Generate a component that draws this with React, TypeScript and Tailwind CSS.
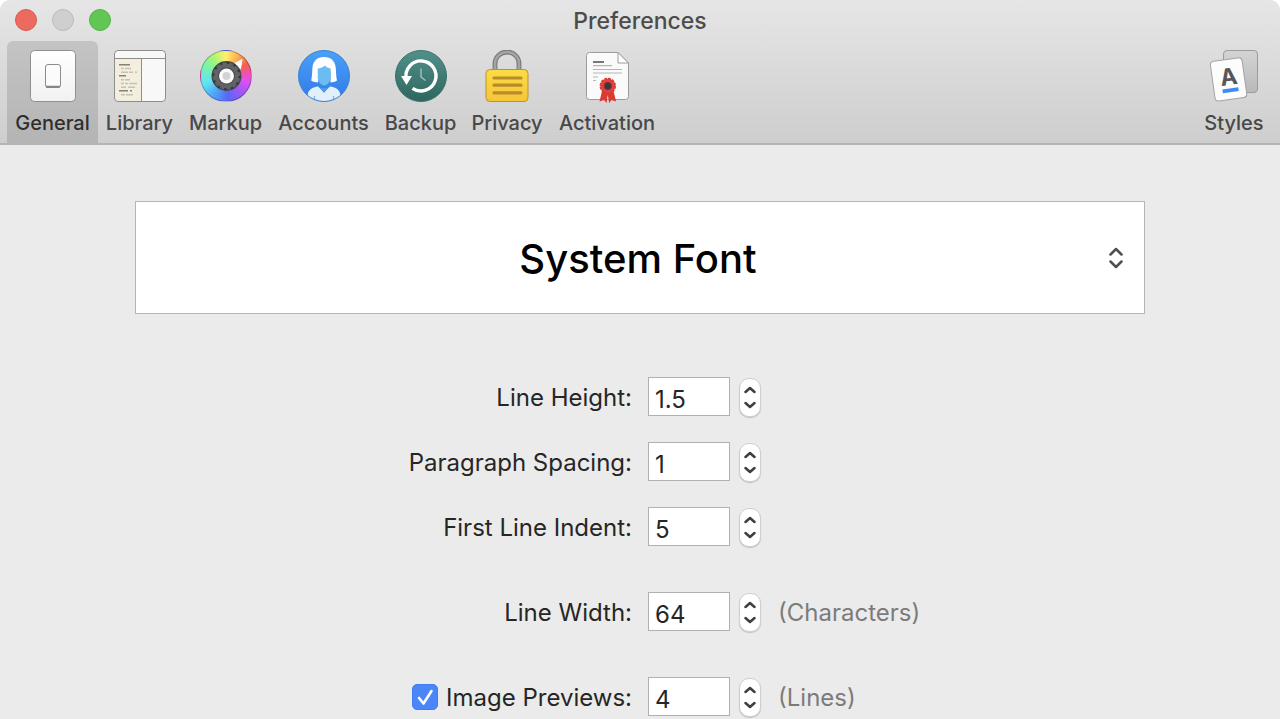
import { useState, type ReactNode } from "react";

function GeneralIcon() {
  return (
    <svg width="52" height="52" viewBox="0 0 52 52" aria-hidden="true">
      <defs>
        <linearGradient id="plate" x1="0" y1="0" x2="0" y2="1">
          <stop offset="0" stopColor="#ffffff" />
          <stop offset="1" stopColor="#f1f1f1" />
        </linearGradient>
      </defs>
      <rect x="3.5" y="0.5" width="45" height="51" rx="4" fill="url(#plate)" stroke="#8f8f8f" />
      <rect x="18.5" y="14.5" width="15" height="23" rx="2.5" fill="#fbfbfb" stroke="#8c8c8c" />
      <path d="M19 36.7h14" stroke="#858585" strokeWidth="2" />
    </svg>
  );
}

function LibraryIcon() {
  return (
    <svg width="52" height="52" viewBox="0 0 52 52" aria-hidden="true">
      <rect x="0.5" y="0.5" width="51" height="51" rx="3.5" fill="#f8f8f9" />
      <path d="M0.5 9H27v42.5H4a3.5 3.5 0 0 1-3.5-3.5Z" fill="#f3eedd" />
      <path d="M0.5 8.5h51M27.5 8.5v43" stroke="#8d8d8b" />
      <rect x="0.5" y="0.5" width="51" height="51" rx="3.5" fill="none" stroke="#8d8d8d" />
      <path d="M5 14.8h11M5 25.8h7M5 40.8h9M16 40.8h2" stroke="#85827a" strokeWidth="1.6" />
      <path
        d="M7 18.5h3M11 18.5h6M7 22.3h7M15 22.3h4M21 22.3h2M7 29.7h3M11 29.7h5M7 33.5h3M11 33.5h3M15 33.5h8M7 37.2h5M14 37.2h7M7 44.7h4M12 44.7h7"
        stroke="#c5c1b3"
        strokeWidth="1.5"
      />
    </svg>
  );
}

function MarkupIcon() {
  return (
    <span className="relative block h-[52px] w-[52px] rounded-full border border-black/25 bg-[conic-gradient(#fff06a,#ffb057_30deg,#f4604f_60deg,#f052b4_84deg,#dc50f4_105deg,#9a57f6_140deg,#5868f5_175deg,#50a7f7_215deg,#62e3f4_250deg,#78f3ac_295deg,#a8f577_325deg,#fff06a)]">
      <svg className="absolute -inset-px" width="52" height="52" viewBox="0 0 52 52" aria-hidden="true">
        <path d="M42 9.500 40.500 19 33.500 14Z" fill="#fff" stroke="#fff" strokeLinejoin="round" />
        <circle cx="26.500" cy="26" r="15" fill="#48494c" />
        <circle cx="26.500" cy="26" r="11" fill="none" stroke="#626367" strokeWidth="5" />
        <circle cx="26.500" cy="26" r="13.200" fill="none" stroke="#343538" strokeWidth="2.200" strokeDasharray="2.200 4.710" />
        <circle cx="26.500" cy="26" r="7.500" fill="#fafafa" />
        <circle cx="26.500" cy="26" r="4" fill="#d3d3d5" />
      </svg>
    </span>
  );
}

function AccountsIcon() {
  return (
    <svg width="52" height="52" viewBox="0 0 52 52" aria-hidden="true">
      <defs>
        <linearGradient id="sky" x1="0" y1="0" x2="0" y2="1">
          <stop offset="0" stopColor="#4aa0f6" />
          <stop offset="1" stopColor="#3179ea" />
        </linearGradient>
        <clipPath id="disc">
          <circle cx="26" cy="26" r="25" />
        </clipPath>
      </defs>
      <circle cx="26" cy="26" r="25.5" fill="url(#sky)" stroke="#3c83cf" />
      <g clipPath="url(#disc)">
        <path
          d="M26 7C17.5 7 14.6 12.500 14.300 19.500c-.1 4.500-.5 8-1.100 11 2 1.400 4.300 1.900 7.300 2V22h11.500v10.500c2.500-.1 5-.6 7-2-.6-3-1-6.500-1.100-11C37.600 12.500 34.500 7 26 7Z"
          fill="#fff"
        />
        <path d="M20 22h12.500v11l-2 4.500h-9L20 33Z" fill="#3a8aea" />
        <path
          d="M27 15.500c-2 1.700-4.500 2.700-7.300 3v9c0 3.800 3.600 8 6.500 8s6.500-4.200 6.500-8v-9c-2.300-.4-4.300-1.300-5.700-3Z"
          fill="#6bbcf0"
        />
        <path
          d="M20 36.500c-5 .7-8.500 2.500-10 6.500L8 52h36l-2-9c-1.500-4-5-5.800-10-6.500L26 42Z"
          fill="#e2f0fc"
        />
        <path d="M16.500 46v6M35.500 46v6" fill="none" stroke="#78b7ee" strokeWidth="1.300" />
        <path d="m22 38 4 5 4-5Z" fill="#4b9bea" />
      </g>
    </svg>
  );
}

function BackupIcon() {
  return (
    <svg width="52" height="52" viewBox="0 0 52 52" aria-hidden="true">
      <defs>
        <linearGradient id="teal" x1="0" y1="0" x2="0" y2="1">
          <stop offset="0" stopColor="#51918a" />
          <stop offset="1" stopColor="#2f665f" />
        </linearGradient>
      </defs>
      <circle cx="26" cy="26" r="25.500" fill="url(#teal)" stroke="#38736b" />
      <path d="M11.300 29A15 15 0 1 1 17.500 38.300" fill="none" stroke="#fff" strokeWidth="3.400" />
      <path d="M6 26h11l-5.500 9Z" fill="#fff" />
      <path d="M26 18.500V27l4.500 3.500" fill="none" stroke="#9fc8c1" strokeWidth="1.400" />
    </svg>
  );
}

function PrivacyIcon() {
  return (
    <svg width="52" height="52" viewBox="0 0 52 52" aria-hidden="true">
      <defs>
        <linearGradient id="gold" x1="0" y1="0" x2="0" y2="1">
          <stop offset="0" stopColor="#fbdc45" />
          <stop offset="1" stopColor="#f5c53a" />
        </linearGradient>
      </defs>
      <path d="M14 22V13.500a12 11.500 0 0 1 24 0V22" fill="none" stroke="#77787a" strokeWidth="4.800" />
      <path d="M14 22V13.500a12 11.500 0 0 1 24 0V22" fill="none" stroke="#a3a4a6" strokeWidth="2.600" />
      <rect x="5" y="19.500" width="42" height="32" rx="4" fill="url(#gold)" stroke="#bd922b" />
      <path d="M13 28h27M13 35.200h27M13 42.800h27" stroke="#b98b29" strokeWidth="3.200" strokeLinecap="round" />
    </svg>
  );
}

function ActivationIcon() {
  return (
    <svg width="52" height="54" viewBox="0 0 52 54" aria-hidden="true">
      <path d="M8.500 2.500H37L47.500 13v33.500a3 3 0 0 1-3 3h-36a3 3 0 0 1-3-3v-41a3 3 0 0 1 3-3Z" fill="#fafafa" stroke="#9b9b9b" />
      <path d="M37 2.500V13h10.500Z" fill="#fff" stroke="#9b9b9b" strokeLinejoin="round" />
      <path d="M12 12h11" stroke="#55565a" strokeWidth="1.600" />
      <path d="M12 15.700h19M12 19.500h29M12 23h29M12 27h5M12 30.500h3" stroke="#b5b5b7" strokeWidth="1.200" />
      <path d="m21.500 39-3 12.500 4.500-1.500 2.500 3 1.300-8 1.300 8 2.500-3 4.500 1.500L32 39Z" fill="#d93a33" />
      <circle cx="26.800" cy="36" r="7.300" fill="#e0443c" stroke="#d93a33" strokeWidth="1.800" strokeDasharray="3 0.820" />
      <circle cx="26.800" cy="36" r="3.800" fill="#333a42" stroke="#a62b2c" />
    </svg>
  );
}

function StylesIcon() {
  return (
    <svg width="52" height="52" viewBox="0 0 52 52" aria-hidden="true">
      <defs>
        <linearGradient id="back" x1="0" y1="0" x2="0" y2="1">
          <stop offset="0" stopColor="#d4d4d4" />
          <stop offset="1" stopColor="#b9b9b9" />
        </linearGradient>
      </defs>
      <rect x="15.500" y="0.500" width="34" height="42" rx="3.500" fill="url(#back)" stroke="#9b9b9b" />
      <g transform="rotate(-8 20 29)">
        <rect x="4.500" y="9.500" width="32" height="40" rx="3.500" fill="#fcfcfc" stroke="#a3a3a3" />
        <text x="21" y="35" textAnchor="middle" fontFamily="Inter, sans-serif" fontSize="23" fontWeight="700" fill="#55565a">
          A
        </text>
        <path d="M13 40.500h16" stroke="#3b8df5" strokeWidth="3.600" />
      </g>
    </svg>
  );
}

type ToolProps = { label: string; width: string; active?: boolean; onClick?: () => void; children: ReactNode };

function Tool({ label, width, active = false, onClick, children }: ToolProps) {
  return (
    <button
      type="button"
      aria-pressed={active}
      onClick={onClick}
      className={`flex h-[102px] flex-col items-center rounded-t-md pt-[9px] ${width} ${
        active ? "bg-black/12 text-[#2e2e2e]" : "text-[#484848]"
      }`}
    >
      <span className="flex h-[60px] items-start">{children}</span>
      <span className="whitespace-nowrap text-[20px] leading-[26px] font-medium">{label}</span>
    </button>
  );
}

const tools = [
  { label: "General", width: "w-[91px]", icon: <GeneralIcon /> },
  { label: "Library", width: "w-[83px]", icon: <LibraryIcon /> },
  { label: "Markup", width: "w-[89px]", icon: <MarkupIcon /> },
  { label: "Accounts", width: "w-[107px]", icon: <AccountsIcon /> },
  { label: "Backup", width: "w-[87px]", icon: <BackupIcon /> },
  { label: "Privacy", width: "w-[86px]", icon: <PrivacyIcon /> },
  { label: "Activation", width: "w-[114px]", icon: <ActivationIcon /> },
];

function Chevron({ up = false }: { up?: boolean }) {
  return (
    <svg width="12" height="8" viewBox="0 0 12 8" fill="none" aria-hidden="true">
      <path
        d={up ? "M1.500 6 6 2l4.500 4" : "M1.500 2 6 6l4.500-4"}
        stroke="#3f3f3f"
        strokeWidth="2.500"
        strokeLinecap="round"
        strokeLinejoin="round"
      />
    </svg>
  );
}

type FieldProps = { id: string; label: string; initial: string; step?: number; hint?: string; toggle?: boolean };

function NumberRow({ id, label, initial, step = 1, hint, toggle = false }: FieldProps) {
  const [value, setValue] = useState(initial);
  const [on, setOn] = useState(true);
  const change = (delta: number) => setValue(String(Math.max(0, Number(value) + delta)));

  return (
    <div className="grid grid-cols-2 items-center gap-4">
      <div className="flex items-center justify-end gap-2">
        {toggle && (
          <span className="relative flex">
            <input
              type="checkbox"
              aria-label={`Show ${label}`}
              checked={on}
              onChange={() => setOn(!on)}
              className="h-[26px] w-[26px] appearance-none rounded-[5px] border border-[#9a9a9a] bg-white checked:border-[#3f7df0] checked:bg-[#4a86f7]"
            />
            {on && (
              <svg className="pointer-events-none absolute inset-0" width="26" height="26" viewBox="0 0 26 26" fill="none" aria-hidden="true">
                <path d="m7 14 4.500 5.500L19.500 7" stroke="#fff" strokeWidth="2.600" strokeLinecap="round" strokeLinejoin="round" />
              </svg>
            )}
          </span>
        )}
        <label htmlFor={id} className="whitespace-nowrap pt-0.5 text-[24px] leading-[36px] text-[#262626]">
          {label}:
        </label>
      </div>
      <div className="flex items-center">
        <input
          id={id}
          type="text"
          inputMode="decimal"
          value={value}
          onChange={(event) => setValue(event.target.value)}
          className="h-[39px] w-[82px] border border-[#b1b1b1] bg-white px-1.5 pt-1.5 text-[24px] leading-[30px] text-[#262626] outline-none"
        />
        <span className="ml-[9px] -mb-0.5 flex h-[39px] w-[22px] flex-col overflow-hidden rounded-[10px] border border-[#cfcfcf] bg-white shadow-[0_1px_1px_rgba(0,0,0,0.18)]">
          <button type="button" aria-label={`Increase ${label}`} onClick={() => change(step)} className="flex flex-1 items-center justify-center pt-1">
            <Chevron up />
          </button>
          <button type="button" aria-label={`Decrease ${label}`} onClick={() => change(-step)} className="flex flex-1 items-center justify-center pb-1">
            <Chevron />
          </button>
        </span>
        {hint && <span className="ml-[17px] whitespace-nowrap pt-0.5 text-[24px] leading-[36px] text-[#7b7b7b]">({hint})</span>}
      </div>
    </div>
  );
}

export default function App() {
  const [active, setActive] = useState("General");

  return (
    <div className="min-h-screen bg-white font-['Inter',sans-serif]">
      <div className="min-h-screen overflow-hidden rounded-t-[10px] bg-[#ebebeb]">
        <header className="relative border-b-2 border-[#b4b4b4] bg-linear-to-b from-[#e6e6e6] to-[#cecece]">
          <div className="absolute top-[9px] left-[15px] flex gap-[15px]">
            <button type="button" aria-label="Close" className="h-[22px] w-[22px] rounded-full border border-[#d75a50] bg-[#ed6a5f]" />
            <button type="button" aria-label="Minimize" className="h-[22px] w-[22px] rounded-full border border-[#bababa] bg-[#cfcfcf]" />
            <button type="button" aria-label="Zoom" className="h-[22px] w-[22px] rounded-full border border-[#55b046] bg-[#62c655]" />
          </div>
          <h1 className="h-[41px] text-center text-[23px] leading-[42px] font-medium text-[#4c4c4c]">Preferences</h1>
          <nav aria-label="Preference panes" className="flex pr-[3px] pl-[7px]">
            {tools.map((tool) => (
              <Tool
                key={tool.label}
                label={tool.label}
                width={tool.width}
                active={active === tool.label}
                onClick={() => setActive(tool.label)}
              >
                {tool.icon}
              </Tool>
            ))}
            <div className="ml-auto">
              <Tool label="Styles" width="w-[86px]">
                <StylesIcon />
              </Tool>
            </div>
          </nav>
        </header>

        <main className="px-8 pt-14">
          <div className="relative mx-auto max-w-[1010px]">
            <select
              aria-label="Font"
              className="block h-[113px] w-full appearance-none border border-[#b5b5b5] bg-white pt-0.5 pr-1 text-center text-[40px] font-medium text-black [text-align-last:center] outline-none"
            >
              <option>System Font</option>
            </select>
            <svg
              className="pointer-events-none absolute top-[45px] right-[21px]"
              width="16"
              height="24"
              viewBox="0 0 16 24"
              fill="none"
              aria-hidden="true"
            >
              <path d="M2.500 8.500 8 3l5.500 5.500M2.500 15.500 8 21l5.500-5.500" stroke="#505050" strokeWidth="2.500" strokeLinecap="round" strokeLinejoin="round" />
            </svg>
          </div>

          <form className="mt-[63px] flex flex-col gap-[46px]" onSubmit={(event) => event.preventDefault()}>
            <div className="flex flex-col gap-[26px]">
              <NumberRow id="line-height" label="Line Height" initial="1.5" step={0.5} />
              <NumberRow id="paragraph-spacing" label="Paragraph Spacing" initial="1" />
              <NumberRow id="first-line-indent" label="First Line Indent" initial="5" />
            </div>
            <NumberRow id="line-width" label="Line Width" initial="64" hint="Characters" />
            <NumberRow id="image-previews" label="Image Previews" initial="4" hint="Lines" toggle />
          </form>
        </main>
      </div>
    </div>
  );
}
